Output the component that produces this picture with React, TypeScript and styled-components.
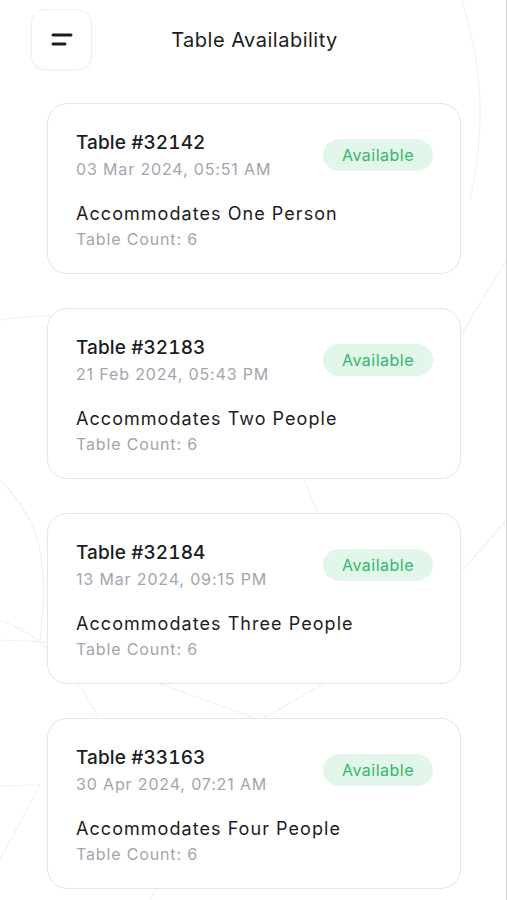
import styled, { createGlobalStyle } from 'styled-components';

const GlobalStyle = createGlobalStyle`
  html, body {
    margin: 0;
    padding: 0;
    background: #ffffff;
  }
  body {
    font-family: Inter, "Noto Sans", sans-serif;
    color: #1c1c1e;
  }
`;

const Page = styled.div`
  position: relative;
  width: 507px;
  min-height: 900px;
  overflow: hidden;
  background: #fff;
`;

const Backdrop = styled.svg`
  position: absolute;
  inset: 0;
  width: 507px;
  height: 900px;
  pointer-events: none;
`;

const Content = styled.div`
  position: relative;
  display: flex;
  flex-direction: column;
  padding: 8px 46px 0 47px;
`;

const Header = styled.header`
  display: grid;
  grid-template-columns: 61px 1fr 61px;
  align-items: center;
  margin-left: -16px;
  margin-right: -15px;
  height: 62px;
`;

const MenuButton = styled.button`
  width: 61px;
  height: 61px;
  border: 1px solid #efefef;
  border-radius: 14px;
  background: #fff;
  display: flex;
  align-items: center;
  justify-content: center;
  padding: 0;
  box-shadow: 0 1px 3px rgba(0, 0, 0, 0.03);
`;

const Title = styled.h1`
  margin: 0 0 0 2px;
  text-align: center;
  font-size: 20px;
  line-height: 26px;
  padding-top: 2px;
  font-weight: 400;
  letter-spacing: 0.5px;
  color: #1c1c1e;
`;

const List = styled.div`
  display: flex;
  flex-direction: column;
  gap: 34px;
  margin-top: 33px;
`;

const Card = styled.div`
  background: #fff;
  border: 1px solid #e6e6e8;
  border-radius: 20px;
  height: 171px;
  box-sizing: border-box;
  padding: 27px 27px 0 28px;
  display: flex;
  flex-direction: column;
`;

const CardTop = styled.div`
  display: flex;
  align-items: flex-start;
  justify-content: space-between;
`;

const TableName = styled.div`
  font-size: 19px;
  line-height: 24px;
  font-weight: 500;
  letter-spacing: 0.1px;
  font-variant-numeric: tabular-nums;
  color: #1c1c1e;
`;

const Seats = styled.div`
  font-size: 18px;
  line-height: 24px;
  font-weight: 400;
  letter-spacing: 1.05px;
  color: #1c1c1e;
`;

const Secondary = styled.div<{ $gap: number }>`
  font-size: 16px;
  line-height: 22px;
  letter-spacing: 0.85px;
  color: #a3a5ad;
  margin-top: ${(p) => p.$gap}px;
`;

const Badge = styled.span`
  display: inline-flex;
  align-items: center;
  justify-content: center;
  width: 110px;
  height: 32px;
  margin-top: 8px;
  border-radius: 16px;
  background: #e2f6ea;
  color: #33b86a;
  font-size: 16px;
  font-weight: 400;
  letter-spacing: 0.5px;
`;

const Details = styled.div`
  margin-top: 22px;
`;

const EdgeLine = styled.div`
  position: absolute;
  top: 0;
  right: 0;
  width: 1px;
  height: 900px;
  background: #d5d5d5;
`;

type Row = { id: string; date: string; seats: string };

const rows: Row[] = [
  { id: '32142', date: '03 Mar 2024, 05:51 AM', seats: 'Accommodates One Person' },
  { id: '32183', date: '21 Feb 2024, 05:43 PM', seats: 'Accommodates Two People' },
  { id: '32184', date: '13 Mar 2024, 09:15 PM', seats: 'Accommodates Three People' },
  { id: '33163', date: '30 Apr 2024, 07:21 AM', seats: 'Accommodates Four People' },
];

const App = () => {
  return (
    <>
      <GlobalStyle />
      <Page>
        <Backdrop viewBox="0 0 507 900" fill="none" stroke="#f1f1f1" strokeWidth="1.2">
          <path d="M462 0 C480 60 488 120 470 200" />
          <path d="M0 320 C120 300 230 360 300 470 C320 520 340 560 360 600" />
          <path d="M0 620 C60 640 90 700 110 740" />
          <path d="M0 480 C40 520 50 560 40 640" />
          <path d="M507 520 C470 560 440 600 400 640" />
          <path d="M507 260 C460 330 420 420 360 470" />
          <path d="M0 640 L45 642 L260 720 L330 680" />
          <path d="M0 786 L40 785 L0 860" />
          <path d="M150 900 C160 880 170 870 180 860" />
        </Backdrop>
        <EdgeLine />
        <Content>
          <Header>
            <MenuButton aria-label="menu">
              <svg width="22" height="14" viewBox="0 0 22 14">
                <path d="M2 3 H20" stroke="#1c1c1e" strokeWidth="3" strokeLinecap="round" />
                <path d="M2 12 H14" stroke="#1c1c1e" strokeWidth="3" strokeLinecap="round" />
              </svg>
            </MenuButton>
            <Title>Table Availability</Title>
            <span />
          </Header>
          <List>
            {rows.map((r) => (
              <Card key={r.id}>
                <CardTop>
                  <div>
                    <TableName>Table #{r.id}</TableName>
                    <Secondary $gap={3}>{r.date}</Secondary>
                  </div>
                  <Badge>Available</Badge>
                </CardTop>
                <Details>
                  <Seats>{r.seats}</Seats>
                  <Secondary $gap={2}>Table Count: 6</Secondary>
                </Details>
              </Card>
            ))}
          </List>
        </Content>
      </Page>
    </>
  );
};

export default App;
